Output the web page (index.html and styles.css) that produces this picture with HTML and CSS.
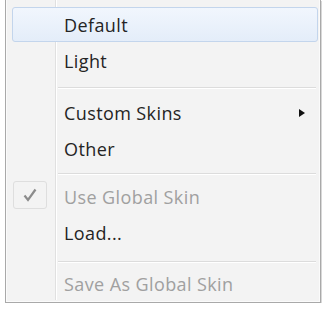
FILE: index.html
```html
<!DOCTYPE html>
<html>
<head>
<meta charset="utf-8">
<link rel="stylesheet" href="styles.css">
</head>
<body>
<div class="menu">
  <div class="gutter"></div>
  <div class="item active"><span class="label">Default</span></div>
  <div class="item"><span class="label">Light</span></div>
  <div class="sep sep-a"></div>
  <div class="item"><span class="label">Custom Skins</span><span class="arrow"></span></div>
  <div class="item"><span class="label">Other</span></div>
  <div class="sep sep-b"></div>
  <div class="item disabled">
    <span class="check"><svg width="14" height="14" viewBox="0 0 14 14"><path d="M1.5 7.5 L5 12 L12.5 1.5" fill="none" stroke="#8c8c8c" stroke-width="2.2"/></svg></span>
    <span class="label">Use Global Skin</span>
  </div>
  <div class="item"><span class="label">Load...</span></div>
  <div class="sep sep-c"></div>
  <div class="item disabled"><span class="label">Save As Global Skin</span></div>
</div>
</body>
</html>
```
FILE: styles.css
```css
html, body {
  margin: 0;
  padding: 0;
  background: #ffffff;
}
.menu {
  position: relative;
  margin-left: 5px;
  width: 316px;
  height: 303px;
  padding-top: 7px;
  box-sizing: border-box;
  background: #f3f3f3;
  border-left: 1px solid #a9a9a9;
  border-right: 1px solid #a9a9a9;
  border-bottom: 1px solid #a9a9a9;
  box-shadow: inset 1px 0 0 #fbfbfb, inset -1px 0 0 #fbfbfb, inset 0 -1px 0 #fbfbfb, 1px 1px 0 #d8d8d8;
  font-family: "Open Sans", "Noto Sans", sans-serif;
  font-size: 18px;
  font-weight: 500;
  letter-spacing: 0.4px;
  color: #242424;
}
.gutter {
  position: absolute;
  left: 49px;
  top: 0;
  bottom: 2px;
  width: 1px;
  background: #e0e0e0;
  box-shadow: 1px 0 0 #ffffff;
}
.item {
  position: relative;
  height: 36px;
  display: flex;
  align-items: center;
  margin: 0 2px 0 6px;
  padding-left: 51px;
  border: 1px solid transparent;
  box-sizing: border-box;
}
.item.active {
  height: 35px;
  margin-bottom: 1px;
  background: linear-gradient(#f1f6fd, #e4edf9);
  border-color: #c3d5ec;
  border-radius: 3px;
}
.label {
  line-height: 1;
}
.disabled .label {
  color: #a0a0a0;
}
.sep {
  margin-left: 52px;
  margin-right: 4px;
  display: flex;
  align-items: center;
}
.sep-a { height: 16px; }
.sep-b { height: 12px; }
.sep-c { height: 15px; padding-top: 6px; box-sizing: border-box; }
.sep::before {
  content: "";
  display: block;
  width: 100%;
  height: 1px;
  background: #dcdcdc;
  box-shadow: 0 1px 0 #ffffff;
}
.arrow {
  position: absolute;
  right: 12px;
  top: 13px;
  width: 0;
  height: 0;
  border-top: 4.5px solid transparent;
  border-bottom: 4.5px solid transparent;
  border-left: 6px solid #111;
}
.check {
  position: absolute;
  left: 0;
  top: 1px;
  width: 34px;
  height: 28px;
  border: 1px solid #dedede;
  border-radius: 3px;
  box-sizing: border-box;
  display: flex;
  align-items: center;
  justify-content: center;
}
```
